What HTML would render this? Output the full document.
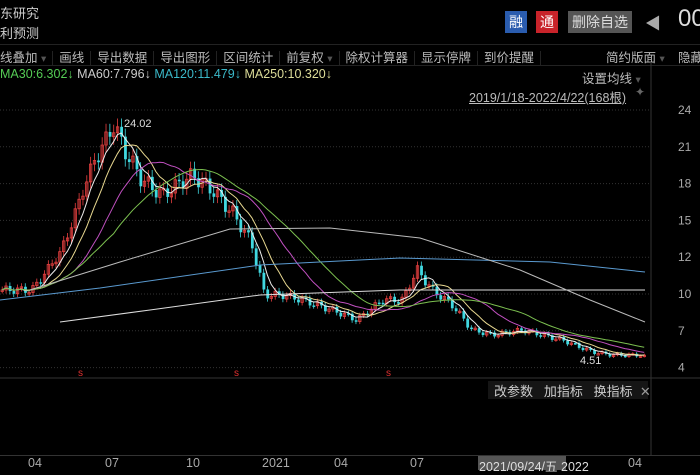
<!DOCTYPE html>
<html><head><meta charset="utf-8"><style>
body{margin:0;background:#000;width:700px;height:470px;overflow:hidden;font-family:"Liberation Sans","Noto Sans CJK SC",sans-serif;color:#bbb;position:relative}
.a{position:absolute;white-space:nowrap}
.tb span{margin-right:0;padding:0 6px;border-right:1px solid #222}
</style></head><body>
<div class="a" style="left:0;top:3px;font-size:13px;color:#ccc">东研究</div>
<div class="a" style="left:0;top:23px;font-size:13px;color:#ccc">利预测</div>
<div class="a" style="left:505px;top:11px;width:22px;height:22px;background:#2a5cae;color:#fff;font-size:14px;text-align:center;line-height:22px">融</div>
<div class="a" style="left:536px;top:11px;width:22px;height:22px;background:#c8232a;color:#fff;font-size:14px;text-align:center;line-height:22px">通</div>
<div class="a" style="left:568px;top:11px;width:64px;height:22px;background:#555;color:#ddd;font-size:14px;text-align:center;line-height:22px">删除自选</div>
<div class="a" style="left:645px;top:10px;font-size:16px;color:#aaa">◀</div>
<div class="a" style="left:678px;top:5px;font-size:24px;color:#ddd">00</div>
<div class="a" style="left:0;top:44px;width:700px;height:20px;border-top:1px solid #222;border-bottom:1px solid #222"></div>
<div class="a tb" style="left:-6px;top:47px;font-size:12.5px;color:#bbb">
<span>线叠加 <small style="color:#555">▾</small></span><span>画线</span><span>导出数据</span><span>导出图形</span><span>区间统计</span><span>前复权 <small style="color:#555">▾</small></span><span>除权计算器</span><span>显示停牌</span><span>到价提醒</span></div>
<div class="a" style="left:606px;top:47px;font-size:12.5px">简约版面 <small style="color:#555">▾</small></div>
<div class="a" style="left:678px;top:47px;font-size:12.5px">隐藏</div>
<div class="a" style="left:0;top:67px;font-size:12.5px"><span style="color:#5c5">MA30:6.302↓</span> <span style="color:#ccc">MA60:7.796↓</span> <span style="color:#3bb8c8">MA120:11.479↓</span> <span style="color:#dd9">MA250:10.320↓</span></div>
<div class="a" style="left:582px;top:68px;font-size:12.5px">设置均线 <small style="color:#555">▾</small></div>
<div class="a" style="left:469px;top:87px;font-size:12.5px;text-decoration:underline">2019/1/18-2022/4/22(168根)</div>
<div class="a" style="left:635px;top:85px;font-size:12px;color:#666">✦</div>
<svg class="a" style="left:0;top:0" width="700" height="470" id="s"></svg>
<div class="a" style="left:488px;top:381px;width:160px;height:18px;background:#151515"></div>
<div class="a" style="left:494px;top:381px;font-size:13px;color:#ccc">改参数 &nbsp; 加指标 &nbsp; 换指标 &nbsp;<span style="color:#999">✕</span></div>
<div class="a" style="left:0;top:455px;width:700px;border-top:1px solid #333"></div>
<div class="a" style="left:478px;top:456px;width:88px;height:14px;background:#555"></div>
<div class="a" style="top:456px;font-size:12.5px;left:0;width:700px;color:#aaa">
<span class="a" style="left:28px">04</span><span class="a" style="left:105px">07</span><span class="a" style="left:186px">10</span><span class="a" style="left:262px">2021</span><span class="a" style="left:334px">04</span><span class="a" style="left:410px">07</span><span class="a" style="left:479px;color:#ddd">2021/09/24/五 2022</span><span class="a" style="left:628px">04</span></div>
<script>
var s=document.getElementById('s'),h='';
function Y(p){return 110+(24-p)*12.3}
function P(y){return 24-(y-110)/12.3}
[24,21,18,15,12,10,7,4].forEach(function(p,i){var y=110+i*36.8;h+='<line x1="0" x2="650" y1="'+y+'" y2="'+y+'" stroke="#333" stroke-dasharray="1,2"/>';h+='<text x="678" y="'+(y+4)+'" fill="#aaa" font-size="12">'+p+'</text>';});
h+='<line x1="651" x2="651" y1="62" y2="455" stroke="#333"/>';
h+='<line x1="0" x2="700" y1="378" y2="378" stroke="#333"/>';
var k=[[0,290],[30,290],[60,250],[90,165],[112,125],[122,150],[140,180],[160,195],[190,175],[210,190],[232,215],[250,245],[262,295],[280,295],[300,300],[330,310],[355,320],[380,300],[400,300],[415,270],[430,290],[450,305],[470,330],[490,335],[520,330],[560,340],[590,352],[610,355],[640,355],[646,360]];
k=k.map(function(e){return [e[0],P(e[1])]});
var c=[],n=168,dx=646/n;
for(var i=0;i<n;i++){var x=i*dx,j=0;while(j<k.length-2&&k[j+1][0]<x)j++;var a=k[j],b=k[j+1],t=(x-a[0])/(b[0]-a[0]);var p=a[1]+(b[1]-a[1])*t+Math.sin(i*1.7)*0.35*a[1]/10;c.push(p);}
for(i=0;i<n;i++){var o=i?c[i-1]:c[0],cl=c[i],x=i*dx+1,up=cl>=o,hi=Math.max(o,cl)*1.03,lo=Math.min(o,cl)*0.97,col=up?'#e84040':'#40d8e0';
h+='<line x1="'+(x+1.2)+'" x2="'+(x+1.2)+'" y1="'+Y(hi)+'" y2="'+Y(lo)+'" stroke="'+col+'" stroke-width="0.8"/>';
var yt=Y(Math.max(o,cl)),hh=Math.max(1.5,Math.abs(Y(o)-Y(cl)));
h+=up?'<rect x="'+x+'" y="'+yt+'" width="2.4" height="'+hh+'" fill="none" stroke="'+col+'" stroke-width="0.8"/>':'<rect x="'+x+'" y="'+yt+'" width="2.8" height="'+hh+'" fill="'+col+'"/>';}
function ma(m,col){var pts=[];for(var i=0;i<n;i++){var s2=0,q=0;for(var j=Math.max(0,i-m+1);j<=i;j++){s2+=c[j];q++}pts.push((i*dx+2).toFixed(1)+','+Y(s2/q).toFixed(1));}h+='<polyline points="'+pts.join(' ')+'" fill="none" stroke="'+col+'" stroke-width="1"/>';}
ma(5,'#eee');ma(10,'#e8d890');ma(20,'#c050c0');ma(30,'#7cc050');
h+='<polyline points="0,300 100,288 260,265 400,258 550,262 645,272" fill="none" stroke="#5a9ad0" stroke-width="1"/>';
h+='<polyline points="60,322 150,310 260,295 400,290 645,290" fill="none" stroke="#ddd" stroke-width="1"/>';
h+='<polyline points="30,290 120,262 230,229 330,228 420,238 520,270 590,300 645,322" fill="none" stroke="#bbb" stroke-width="1"/>';
h+='<text x="124" y="127" fill="#ddd" font-size="11">24.02</text><text x="580" y="364" fill="#ddd" font-size="11">4.51</text>';
[78,234,386].forEach(function(x){h+='<text x="'+x+'" y="376" fill="#e03030" font-size="10">s</text>'});
s.innerHTML=h;
</script>
</body></html>
